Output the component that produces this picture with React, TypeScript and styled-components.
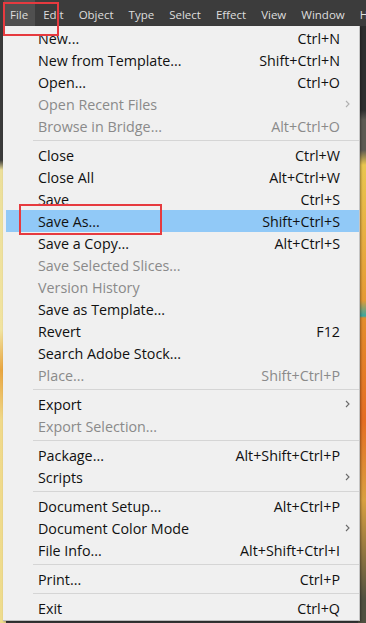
import React from "react";
import styled, { createGlobalStyle } from "styled-components";

const Global = createGlobalStyle`
  html, body { margin: 0; padding: 0; }
  body { width: 366px; height: 623px; overflow: hidden; font-family: "Open Sans", "Noto Sans", sans-serif; }
`;

const Screen = styled.div`
  position: relative;
  width: 366px;
  height: 623px;
  overflow: hidden;
  display: flex;
  flex-direction: column;
  background:
    linear-gradient(180deg, #3a3a3a 0px, #3a3a3a 160px, #ecdf9a 170px, #f1e3a0 330px, #e9a640 370px, #f0d98a 420px, #eedc8e 623px) left / 6px 100% no-repeat,
    linear-gradient(180deg, #2e2e2e 0px, #2e2e2e 110px, #5d5a52 120px, #5d5a52 150px, #e9c650 165px, #e59a35 300px, #3aa7a0 316px, #e38d2c 318px, #e46d22 420px, #d9a040 500px, #505040 600px) right / 8px 100% no-repeat,
    #3a3a3a;
`;

const MenuBar = styled.div`
  height: 26px;
  display: flex;
  align-items: stretch;
  background: #3c3c3c;
  padding-left: 4px;
  flex-shrink: 0;
`;

const BarItem = styled.div<{ $active?: boolean }>`
  display: flex;
  align-items: center;
  padding: 2px 7px 0 6px;
  margin-right: 2px;
  font-size: 11.5px;
  color: #dedede;
  background: ${(p) => (p.$active ? "#505050" : "transparent")};
  white-space: nowrap;
`;

const Dropdown = styled.div`
  margin: 0 6px 0 3px;
  background: #f0f0f0;
  border-right: 1px solid #c4c4c4;
  border-bottom: 1px solid #bdbdbd;
  padding: 1px 0 1px 0;
  display: flex;
  flex-direction: column;
  box-shadow: 1px 1px 2px rgba(0, 0, 0, 0.35);
`;

const Row = styled.div<{ $disabled?: boolean; $selected?: boolean }>`
  height: 22px;
  margin-left: 3px;
  display: grid;
  grid-template-columns: 1fr auto 19px;
  align-items: center;
  padding-left: 32px;
  font-size: 14.3px;
  color: ${(p) => (p.$disabled ? "#8a8a8a" : "#111111")};
  background: ${(p) => (p.$selected ? "#91c9f7" : "transparent")};
  white-space: nowrap;
`;

const Shortcut = styled.span`
  text-align: right;
`;

const Arrow = styled.span<{ $disabled?: boolean }>`
  display: flex;
  align-items: center;
  justify-content: flex-start;
  padding-left: 5px;
  color: ${(p) => (p.$disabled ? "#b0b0b0" : "#6a6a6a")};
`;

const Separator = styled.div`
  height: 7px;
  margin-left: 30px;
  display: flex;
  align-items: center;
  &::after {
    content: "";
    flex: 1;
    height: 1px;
    background: #d5d5d5;
  }
`;

const Annotation = styled.div<{ $x: number; $y: number; $w: number; $h: number }>`
  position: absolute;
  left: ${(p) => p.$x}px;
  top: ${(p) => p.$y}px;
  width: ${(p) => p.$w}px;
  height: ${(p) => p.$h}px;
  border: 2px solid #e63a3f;
  box-sizing: border-box;
  pointer-events: none;
`;

const Chevron = () => (
  <svg width="5" height="8" viewBox="0 0 5 8">
    <path d="M1 1 L4 4 L1 7" fill="none" stroke="currentColor" strokeWidth="1.1" />
  </svg>
);

type Item =
  | { sep: true }
  | { label: string; sc?: string; disabled?: boolean; sub?: boolean; selected?: boolean; sep?: false };

const items: Item[] = [
  { label: "New...", sc: "Ctrl+N" },
  { label: "New from Template...", sc: "Shift+Ctrl+N" },
  { label: "Open...", sc: "Ctrl+O" },
  { label: "Open Recent Files", disabled: true, sub: true },
  { label: "Browse in Bridge...", sc: "Alt+Ctrl+O", disabled: true },
  { sep: true },
  { label: "Close", sc: "Ctrl+W" },
  { label: "Close All", sc: "Alt+Ctrl+W" },
  { label: "Save", sc: "Ctrl+S" },
  { label: "Save As...", sc: "Shift+Ctrl+S", selected: true },
  { label: "Save a Copy...", sc: "Alt+Ctrl+S" },
  { label: "Save Selected Slices...", disabled: true },
  { label: "Version History", disabled: true },
  { label: "Save as Template..." },
  { label: "Revert", sc: "F12" },
  { label: "Search Adobe Stock..." },
  { label: "Place...", sc: "Shift+Ctrl+P", disabled: true },
  { sep: true },
  { label: "Export", sub: true },
  { label: "Export Selection...", disabled: true },
  { sep: true },
  { label: "Package...", sc: "Alt+Shift+Ctrl+P" },
  { label: "Scripts", sub: true },
  { sep: true },
  { label: "Document Setup...", sc: "Alt+Ctrl+P" },
  { label: "Document Color Mode", sub: true },
  { label: "File Info...", sc: "Alt+Shift+Ctrl+I" },
  { sep: true },
  { label: "Print...", sc: "Ctrl+P" },
  { sep: true },
  { label: "Exit", sc: "Ctrl+Q" },
];

const barItems = ["File", "Edit", "Object", "Type", "Select", "Effect", "View", "Window", "Help"];

export default function App() {
  return (
    <Screen>
      <Global />
      <MenuBar>
        {barItems.map((b, i) => (
          <BarItem key={b} $active={i === 0}>
            {b}
          </BarItem>
        ))}
      </MenuBar>
      <Dropdown>
        {items.map((it, i) =>
          it.sep ? (
            <Separator key={i} />
          ) : (
            <Row key={i} $disabled={it.disabled} $selected={it.selected}>
              <span>{it.label}</span>
              <Shortcut>{it.sc ?? ""}</Shortcut>
              <Arrow $disabled={it.disabled}>{it.sub ? <Chevron /> : null}</Arrow>
            </Row>
          )
        )}
      </Dropdown>
      <Annotation $x={3} $y={2} $w={56} $h={34} />
      <Annotation $x={19} $y={204} $w={143} $h={31} />
    </Screen>
  );
}
